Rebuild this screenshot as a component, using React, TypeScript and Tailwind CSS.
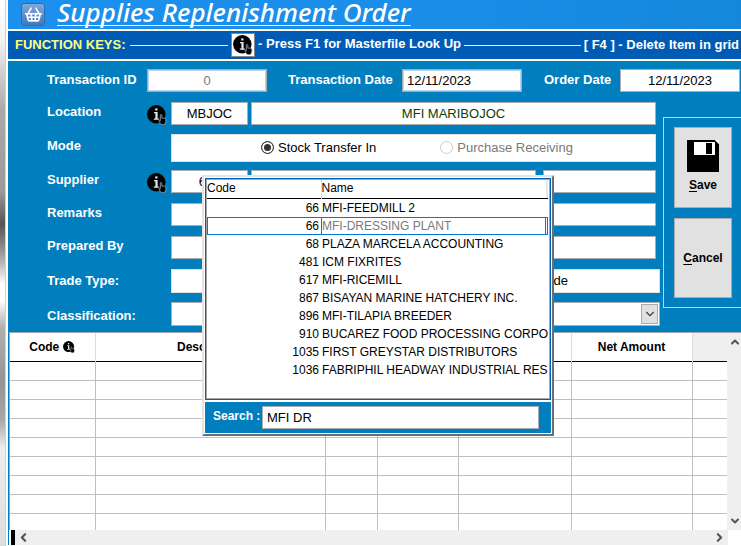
import type { InputHTMLAttributes, ReactNode } from "react";
import { ChevronDown, ChevronLeft, ChevronRight, ChevronUp, ShoppingBasket } from "lucide-react";

const suppliers: [number, string][] = [
  [66, "MFI-FEEDMILL 2"],
  [66, "MFI-DRESSING PLANT"],
  [68, "PLAZA MARCELA ACCOUNTING"],
  [481, "ICM FIXRITES"],
  [617, "MFI-RICEMILL"],
  [867, "BISAYAN MARINE HATCHERY INC."],
  [896, "MFI-TILAPIA BREEDER"],
  [910, "BUCAREZ FOOD PROCESSING CORPO"],
  [1035, "FIRST GREYSTAR DISTRIBUTORS"],
  [1036, "FABRIPHIL HEADWAY INDUSTRIAL RES"],
];

function InfoIcon({ className }: { className: string }) {
  return (
    <svg viewBox="0 0 20 20" className={className} aria-hidden="true">
      <circle cx="9.3" cy="9.3" r="9.2" fill="#000" />
      <path d="M7 7h3.6v6.5h1.2v1.2H6.8v-1.2h1.6V8.2H7z" fill="#dfeaf5" />
      <rect x="8.2" y="3.4" width="2.3" height="2.1" fill="#dfeaf5" />
      <path
        d="M13.3 10.2c0-.9 1.5-.9 1.5 0v3c1.7-.4 4.2.1 4.2 1.6 0 2.6-.8 4.9-2.4 4.9h-1.9c-1 0-1.9-2-2.6-3.7-.4-.9.6-1.2 1.2-.3z"
        fill="#000"
        stroke="#a9c9df"
        strokeWidth=".7"
      />
    </svg>
  );
}

function Field({ className = "", ...rest }: InputHTMLAttributes<HTMLInputElement>) {
  return (
    <input
      type="text"
      className={`h-[23px] min-w-0 rounded-none border border-[#a9adb0] bg-white text-[13px] outline-none ${className}`}
      {...rest}
    />
  );
}

function Row({
  label,
  htmlFor,
  icon = false,
  className = "h-[33px] pr-[7px]",
  labelClass = "pb-1",
  children,
}: {
  label: string;
  htmlFor: string;
  icon?: boolean;
  className?: string;
  labelClass?: string;
  children: ReactNode;
}) {
  return (
    <div className={`flex items-center ${className}`}>
      <label htmlFor={htmlFor} className={`w-[100px] shrink-0 whitespace-nowrap text-[13px] font-bold text-white ${labelClass}`}>
        {label}
      </label>
      <span className="flex w-6 shrink-0 pt-[2px]">{icon && <InfoIcon className="size-5" />}</span>
      {children}
    </div>
  );
}

function Radio({ id, name, text, checked = false, disabled = false }: { id: string; name: string; text: string; checked?: boolean; disabled?: boolean }) {
  return (
    <label htmlFor={id} className={`flex items-center gap-1 whitespace-nowrap ${disabled ? "text-[#7a7a7a]" : "text-black"}`}>
      <input
        id={id}
        type="radio"
        name={name}
        defaultChecked={checked}
        disabled={disabled}
        className="size-[13px] appearance-none rounded-full border border-[#333] bg-white checked:bg-[#333] checked:shadow-[inset_0_0_0_2px_white] disabled:border-[#ccc]"
      />
      {text}
    </label>
  );
}

function LookupPopup() {
  return (
    <section
      aria-label="Supplier look up"
      className="absolute left-[202px] top-[175px] w-[352px] border-2 border-b-[#6b6f74] border-l-[#e4e4e4] border-r-[#6b6f74] border-t-[#e4e4e4] bg-white p-px"
    >
      <div className="h-[222px] border border-[#0060b8]">
        <div className="h-full overflow-hidden border border-[#a3a7ab] pr-px">
          <table className="w-full table-fixed border-collapse text-[12px] leading-[17px] text-black">
            <colgroup>
              <col className="w-[114px]" />
              <col />
              <col className="w-[2px]" />
            </colgroup>
            <thead>
              <tr className="h-[18px] border-b border-black text-left">
                <th className="border-r border-[#dcdcdc] p-0 font-normal">Code</th>
                <th className="p-0 font-normal">Name</th>
                <td className="bg-[#e8e8e8] p-0" />
              </tr>
            </thead>
            <tbody>
              {suppliers.map(([code, name], i) => (
                <tr key={name} className={`h-[18px] ${i === 1 ? "outline outline-1 -outline-offset-1 outline-[#0078d7]" : ""}`}>
                  <td className="p-0 pr-[2px] pt-px text-right">{code}</td>
                  <td colSpan={2} className="whitespace-nowrap p-0">
                    <div
                      className={`pt-px ${
                        i === 1 ? "mr-[2px] border-x border-[#0078d7] text-[#7a7a7a]" : "pl-px"
                      }`}
                    >
                      {name}
                    </div>
                  </td>
                </tr>
              ))}
            </tbody>
          </table>
        </div>
      </div>
      <div className="mt-[2px] flex h-[31px] items-center bg-[#007ebd] pl-2 pr-3">
        <label htmlFor="search" className="w-[49px] whitespace-nowrap pb-1 text-[12px] font-bold text-white">
          Search :
        </label>
        <Field id="search" className="flex-1 px-1" defaultValue="MFI DR" />
      </div>
    </section>
  );
}

export default function App() {
  return (
    <div className="relative flex min-h-screen bg-white font-['Liberation_Sans',Arial,sans-serif] text-[13px]">
      <div className="w-[5px] shrink-0 bg-[linear-gradient(to_bottom,#fff_0%,#f4f4f4_7%,#aaa_20%,#9a9a9a_35%,#555_41%,#888_45%,#b5b5b5_48%,#fff_52%,#fff_55%,#b0b0b0_60%,#949494_70%,#a8a8a8_77%,#eee_82%,#ddd_100%)]" />
      <div className="w-[3px] shrink-0 border-l border-[#d0d0d0] bg-white" />
      <div className="flex min-w-0 flex-1 flex-col">
        <header className="flex h-[31px] items-center border-b-2 border-white bg-linear-to-r from-[#1b90ee] via-[#1b8eea] to-[#1488dc] pl-[13px]">
          <span className="flex h-[23px] w-6 items-center justify-center rounded-[3px] border border-[#2d6bb5] bg-linear-to-b from-[#7fa9d8] to-[#3e79bb] text-white">
            <ShoppingBasket size={19} strokeWidth={2} />
          </span>
          <h1 className="ml-3 whitespace-nowrap pb-1 font-['Noto_Sans',sans-serif] text-[26px] font-medium italic leading-[25px] text-white underline decoration-1 underline-offset-[3px] [text-decoration-skip-ink:none]">
            Supplies Replenishment Order
          </h1>
        </header>

        <div className="flex h-[30px] items-center whitespace-nowrap border-b-2 border-white bg-[#005bb5] pl-[7px] pr-[2px] font-bold text-white">
          <span className="text-[#ffff80]">FUNCTION KEYS:</span>
          <span className="ml-1 mr-[3px] h-px flex-[98] bg-[#ffff80]" />
          <span className="flex size-6 items-center justify-center border border-[#888] bg-white">
            <InfoIcon className="size-5" />
          </span>
          <span className="ml-[3px] pb-[2px]">- Press F1 for Masterfile Look Up</span>
          <span className="mx-[3px] h-px flex-[116] bg-[#ffff80]" />
          <span>[ F4 ] - Delete Item in grid</span>
        </div>

        <main className="bg-[#007ebd] pb-[2px] pl-[39px] pt-[3px]">
          <div className="grid h-[33px] grid-cols-[100px_1fr_135px_1fr_98px_1fr] items-center whitespace-nowrap pr-px font-bold text-white">
            <label htmlFor="tid" className="pb-[2px]">Transaction ID</label>
            <Field id="tid" className="w-full text-center font-normal text-[#7a7a7a] shadow-[inset_0_0_0_1px_#bcd3ec]" defaultValue="0" />
            <label htmlFor="tdate" className="pb-[2px] pl-[21px]">Transaction Date</label>
            <Field id="tdate" className="w-full px-1 font-normal text-black shadow-[inset_0_0_0_1px_#bcd3ec]" defaultValue="12/11/2023" />
            <label htmlFor="odate" className="pb-[2px] pl-[22px]">Order Date</label>
            <Field id="odate" className="w-full text-center font-normal text-black" defaultValue="12/11/2023" />
          </div>

          <div className="flex items-start">
            <div className="min-w-0 flex-1">
              <Row label="Location" htmlFor="loc" icon>
                <Field id="loc" className="w-[77px] text-center" defaultValue="MBJOC" />
                <Field aria-label="Location name" className="ml-[3px] flex-1 text-center text-[#0b400b]" defaultValue="MFI MARIBOJOC" />
              </Row>
              <Row label="Mode" htmlFor="mode-in" className="h-[35px] pr-[7px]">
                <div className="flex h-[28px] flex-1 items-center gap-[64px] border border-[#e0e0e0] bg-white pl-[89px]">
                  <Radio id="mode-in" name="mode" text="Stock Transfer In" checked />
                  <Radio id="mode-pr" name="mode" text="Purchase Receiving" disabled />
                </div>
              </Row>
              <Row label="Supplier" htmlFor="sup" icon>
                <Field id="sup" className="w-[77px] text-center" defaultValue="617" />
                <Field aria-label="Supplier name" className="ml-[3px] flex-1" />
                <Field aria-label="Supplier terms" className="ml-[7px] w-[113px]" />
              </Row>
              <Row label="Remarks" htmlFor="rem">
                <Field id="rem" className="flex-1" />
              </Row>
              <Row label="Prepared By" htmlFor="prep">
                <Field id="prep" className="flex-1" />
              </Row>
              <Row label="Trade Type:" htmlFor="trade" className="h-[33px] pr-[3px]" labelClass="">
                <div className="flex h-6 flex-1 items-center justify-end border border-[#e0e0e0] bg-white pr-[91px]">
                  <Radio id="trade" name="trade" text="Non-Trade" />
                </div>
              </Row>
              <Row label="Classification:" htmlFor="cls" className="h-[33px] pr-[3px]" labelClass="pt-1">
                <div className="relative flex h-6 flex-1 border border-[#a9adb0] bg-white p-px">
                  <select id="cls" className="w-full appearance-none bg-white" />
                  <span className="pointer-events-none absolute right-px top-px flex h-5 w-[17px] items-center justify-center border border-[#a9adb0] bg-[#e1e1e1]">
                    <ChevronDown size={14} strokeWidth={2} color="#444" />
                  </span>
                </div>
              </Row>
            </div>
            <div className="mt-5 flex h-[191px] w-[78px] shrink-0 flex-col gap-[10px] border border-r-0 border-[#a8dcf5] py-[9px] pl-[10px] pr-[9px] text-[12px] font-bold text-black">
              <button className="flex flex-1 flex-col items-center justify-center gap-1 border border-[#a9adb0] bg-[#e1e1e1]">
                <svg viewBox="0 0 32 32" className="size-8" aria-hidden="true">
                  <path d="M0 0h28l4 4v28H0z" fill="#000" />
                  <path d="M28 0h4v4z" fill="#fff" />
                  <path d="M7 2h21v13H7z" fill="#fff" />
                  <path d="M19 3h6v11h-6z" fill="#000" />
                </svg>
                <span><u className="underline-offset-2">S</u>ave</span>
              </button>
              <button className="flex-1 border border-[#a9adb0] bg-[#e1e1e1]">
                <u className="underline-offset-2">C</u>ancel
              </button>
            </div>
          </div>
        </main>

        <div className="flex border-l border-[#007ebd]">
          <div className="h-[198px] min-w-0 flex-1 overflow-hidden border-l border-t border-[#a3a7ab]">
            <table className="w-full table-fixed border-collapse text-[12px] text-black">
              <colgroup>
                <col className="w-[85px]" />
                <col />
                <col className="w-[52px]" />
                <col className="w-[81px]" />
                <col className="w-[113px]" />
                <col className="w-[121px]" />
                <col className="w-[35px]" />
              </colgroup>
              <thead>
                <tr className="h-[28px] border-b-1 border-black [&>*]:border-r [&>*]:border-[#dcdcdc] [&>*]:p-0">
                  <th>
                    <span className="flex items-center justify-center gap-1">Code <InfoIcon className="size-3" /></span>
                  </th>
                  <th>Description</th>
                  <th /><th /><th />
                  <th>Net Amount</th>
                  <td className="border-r-0! bg-[#efefef]" />
                </tr>
              </thead>
              <tbody>
                {Array.from({ length: 9 }, (_, r) => (
                  <tr key={r} className="h-[19px] border-b border-[#c0c0c0]">
                    {Array.from({ length: 7 }, (_, c) => (
                      <td key={c} className="border-r border-[#c0c0c0] p-0 last:border-r-0" />
                    ))}
                  </tr>
                ))}
              </tbody>
            </table>
          </div>
          <div className="flex w-[14px] shrink-0 flex-col items-end justify-between border-t border-[#a3a7ab] bg-[#efefef] py-[3px] text-[#555]">
            <ChevronUp size={12} strokeWidth={4} />
            <ChevronDown size={12} strokeWidth={4} />
          </div>
        </div>
        <div className="flex border-l border-[#007ebd] pl-[2px] pr-[13px]">
          <span className="w-1 bg-black" />
          <div className="flex h-[15px] flex-1 items-center justify-between bg-[#efefef] px-[2px] text-[#555]">
            <ChevronLeft size={13} strokeWidth={4} />
            <ChevronRight size={13} strokeWidth={4} />
          </div>
        </div>
      </div>
      <LookupPopup />
    </div>
  );
}
